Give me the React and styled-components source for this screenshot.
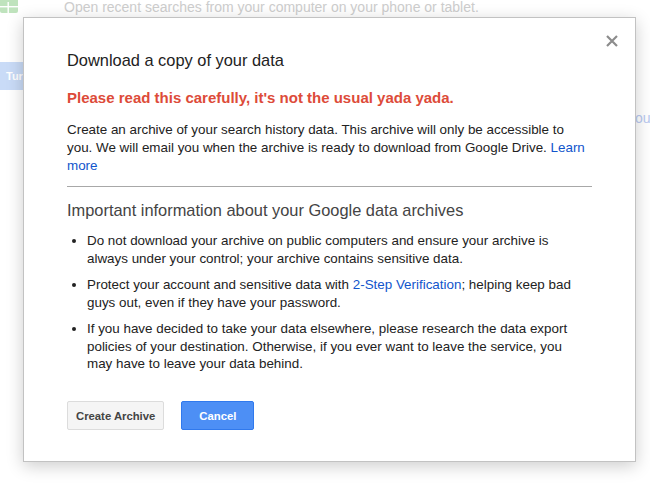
import React from 'react';
import styled, { createGlobalStyle } from 'styled-components';

const GlobalStyle = createGlobalStyle`
  html, body {
    margin: 0;
    padding: 0;
    background: #fff;
  }
  body {
    font-family: 'Liberation Sans', Arial, sans-serif;
  }
`;

const StyledPage = styled.div`
  position: relative;
  width: 650px;
  height: 486px;
  overflow: hidden;
  background: #fff;
`;

const StyledBackdrop = styled.div`
  display: flex;
  flex-direction: column;
  align-items: flex-start;
`;

const StyledTopRow = styled.div`
  display: flex;
  align-items: center;
  height: 14px;

  svg {
    display: block;
    margin-top: -4px;
  }
`;

const StyledFadedText = styled.span`
  margin-left: 46px;
  font-size: 14px;
  line-height: 14px;
  color: #cdcdcd;
  white-space: nowrap;
`;

const StyledGhostButton = styled.div`
  margin-top: 48px;
  height: 28px;
  padding: 0 8px 0 6px;
  display: flex;
  align-items: center;
  background: #c9dbf7;
  color: #fff;
  font-size: 11px;
  font-weight: bold;
  white-space: nowrap;
`;

const StyledGhostLink = styled.span`
  margin: 20px 0 0 628px;
  font-size: 14px;
  line-height: 16px;
  color: #b9c9f0;
  white-space: nowrap;
`;

const StyledDialog = styled.div`
  position: absolute;
  left: 23px;
  top: 17px;
  width: 613px;
  box-sizing: border-box;
  padding: 30px 43px 31px;
  background: #fff;
  border: 1px solid #c2c2c2;
  box-shadow: 0 4px 16px rgba(0, 0, 0, 0.2);
  color: #222;
`;

const StyledClose = styled.button`
  position: absolute;
  top: 16px;
  right: 16px;
  width: 14px;
  height: 14px;
  padding: 0;
  border: 0;
  background: none;
  cursor: pointer;

  svg {
    display: block;
  }
`;

const StyledTitle = styled.h2`
  margin: 0 0 ${(p) => p.gap || 0}px;
  font-size: 16.4px;
  line-height: 24px;
  font-weight: normal;
  color: ${(p) => p.color || '#222'};
`;

const StyledWarning = styled.p`
  margin: 0 0 14px;
  font-size: 15px;
  line-height: 18px;
  font-weight: bold;
  color: #dd4b39;
`;

const StyledText = styled.p`
  margin: 0;
  font-size: 13.4px;
  line-height: 18px;
  color: #222;

  a {
    color: #15c;
    text-decoration: none;
  }
`;

const StyledRule = styled.hr`
  margin: 11px 0;
  border: 0;
  border-top: 1px solid #a8a8a8;
  height: 0;
`;

const StyledList = styled.ul`
  margin: 10px 4px 0 0;
  padding: 0 0 0 20px;
  list-style: disc;
  font-size: 13.4px;
  line-height: 17.5px;
  color: #222;

  li + li {
    margin-top: 9px;
  }

  a {
    color: #15c;
    text-decoration: none;
  }
`;

const StyledActions = styled.div`
  display: flex;
  gap: 17px;
  margin-top: 28.5px;
`;

const StyledButton = styled.button`
  height: 29px;
  min-width: 73px;
  box-sizing: border-box;
  padding: 0 8px;
  border-radius: 2px;
  font-family: 'Liberation Sans', Arial, sans-serif;
  font-size: 11.3px;
  font-weight: bold;
  cursor: pointer;
  border: 1px solid ${(p) => (p.primary ? '#3079ed' : '#dcdcdc')};
  background: ${(p) => (p.primary ? '#4d8ff5' : '#f5f5f5')};
  color: ${(p) => (p.primary ? '#fff' : '#444')};
`;

const GridIcon = () => (
  <svg width="18" height="16" viewBox="0 0 18 16">
    <rect x="0" y="0" width="18" height="16" rx="2" fill="#bfe3bd" />
    <rect x="0" y="9" width="18" height="1.4" fill="#fff" />
    <rect x="7.5" y="5" width="1.4" height="11" fill="#fff" />
  </svg>
);

const CloseIcon = () => (
  <svg width="14" height="14" viewBox="0 0 14 14">
    <path d="M2 2 L12 12 M12 2 L2 12" stroke="#8c8c8c" strokeWidth="2.2" />
  </svg>
);

const App = () => (
  <StyledPage>
    <GlobalStyle />
    <StyledBackdrop>
      <StyledTopRow>
        <GridIcon />
        <StyledFadedText>Open recent searches from your computer on your phone or tablet.</StyledFadedText>
      </StyledTopRow>
      <StyledGhostButton>Turn on</StyledGhostButton>
      <StyledGhostLink>you</StyledGhostLink>
    </StyledBackdrop>

    <StyledDialog>
      <StyledClose aria-label="Close">
        <CloseIcon />
      </StyledClose>
      <StyledTitle gap={17}>Download a copy of your data</StyledTitle>
      <StyledWarning>Please read this carefully, it's not the usual yada yada.</StyledWarning>
      <StyledText>
        Create an archive of your search history data. This archive will only be accessible to
        you. We will email you when the archive is ready to download from Google Drive.{' '}
        <a href="#learn">Learn more</a>
      </StyledText>
      <StyledRule />
      <StyledTitle color="#444">Important information about your Google data archives</StyledTitle>
      <StyledList>
        <li>
          Do not download your archive on public computers and ensure your archive is always
          under your control; your archive contains sensitive data.
        </li>
        <li>
          Protect your account and sensitive data with <a href="#2sv">2-Step Verification</a>;
          helping keep bad guys out, even if they have your password.
        </li>
        <li>
          If you have decided to take your data elsewhere, please research the data export
          policies of your destination. Otherwise, if you ever want to leave the service, you
          may have to leave your data behind.
        </li>
      </StyledList>
      <StyledActions>
        <StyledButton>Create Archive</StyledButton>
        <StyledButton primary>Cancel</StyledButton>
      </StyledActions>
    </StyledDialog>
  </StyledPage>
);

export default App;
